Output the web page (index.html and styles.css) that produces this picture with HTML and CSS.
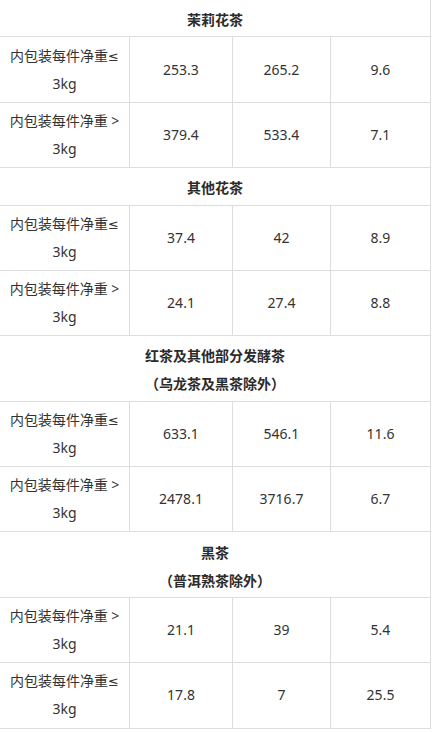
FILE: index.html
```html
<!DOCTYPE html>
<html lang="zh-CN">
<head>
<meta charset="utf-8">
<title>茶叶数据表</title>
<link rel="stylesheet" href="styles.css">
</head>
<body>
<div class="sheet">
  <div class="cell title"><p>茉莉花茶</p></div>
  <div class="cell"><p>内包装每件净重<span class="sym">≤</span><br>3kg</p></div>
  <div class="cell"><p>253.3</p></div>
  <div class="cell"><p>265.2</p></div>
  <div class="cell"><p>9.6</p></div>
  <div class="cell"><p>内包装每件净重 &gt;<br>3kg</p></div>
  <div class="cell"><p>379.4</p></div>
  <div class="cell"><p>533.4</p></div>
  <div class="cell"><p>7.1</p></div>

  <div class="cell title"><p>其他花茶</p></div>
  <div class="cell"><p>内包装每件净重<span class="sym">≤</span><br>3kg</p></div>
  <div class="cell"><p>37.4</p></div>
  <div class="cell"><p>42</p></div>
  <div class="cell"><p>8.9</p></div>
  <div class="cell"><p>内包装每件净重 &gt;<br>3kg</p></div>
  <div class="cell"><p>24.1</p></div>
  <div class="cell"><p>27.4</p></div>
  <div class="cell"><p>8.8</p></div>

  <div class="cell title"><p>红茶及其他部分发酵茶<br>（乌龙茶及黑茶除外）</p></div>
  <div class="cell"><p>内包装每件净重<span class="sym">≤</span><br>3kg</p></div>
  <div class="cell"><p>633.1</p></div>
  <div class="cell"><p>546.1</p></div>
  <div class="cell"><p>11.6</p></div>
  <div class="cell"><p>内包装每件净重 &gt;<br>3kg</p></div>
  <div class="cell"><p>2478.1</p></div>
  <div class="cell"><p>3716.7</p></div>
  <div class="cell"><p>6.7</p></div>

  <div class="cell title"><p>黑茶<br>（普洱熟茶除外）</p></div>
  <div class="cell"><p>内包装每件净重 &gt;<br>3kg</p></div>
  <div class="cell"><p>21.1</p></div>
  <div class="cell"><p>39</p></div>
  <div class="cell"><p>5.4</p></div>
  <div class="cell"><p>内包装每件净重<span class="sym">≤</span><br>3kg</p></div>
  <div class="cell"><p>17.8</p></div>
  <div class="cell"><p>7</p></div>
  <div class="cell"><p>25.5</p></div>
</div>
</body>
</html>
```
FILE: styles.css
```css
html, body {
  margin: 0;
  padding: 0;
  background: #ffffff;
}

body {
  font-family: "Noto Sans", "Noto Sans CJK SC", sans-serif;
  font-size: 14px;
  color: #333333;
}

.sheet {
  width: 430px;
  display: grid;
  grid-template-columns: 129px 102px 97px 99px;
  gap: 1px;
  background: #dddddd;
  padding: 0 1px 1px 0;
}

.cell {
  background: #ffffff;
  padding: 4.2px 4px;
  line-height: 28px;
  text-align: center;
  display: flex;
  flex-direction: column;
  justify-content: center;
}

.cell p {
  margin: 0;
}

.sym {
  font-family: "DejaVu Sans", sans-serif;
  font-size: 13px;
  line-height: 1;
}

.title {
  grid-column: 1 / -1;
  font-weight: bold;
  color: #2b2b2b;
  padding-top: 6.2px;
  padding-bottom: 2.2px;
}
```
